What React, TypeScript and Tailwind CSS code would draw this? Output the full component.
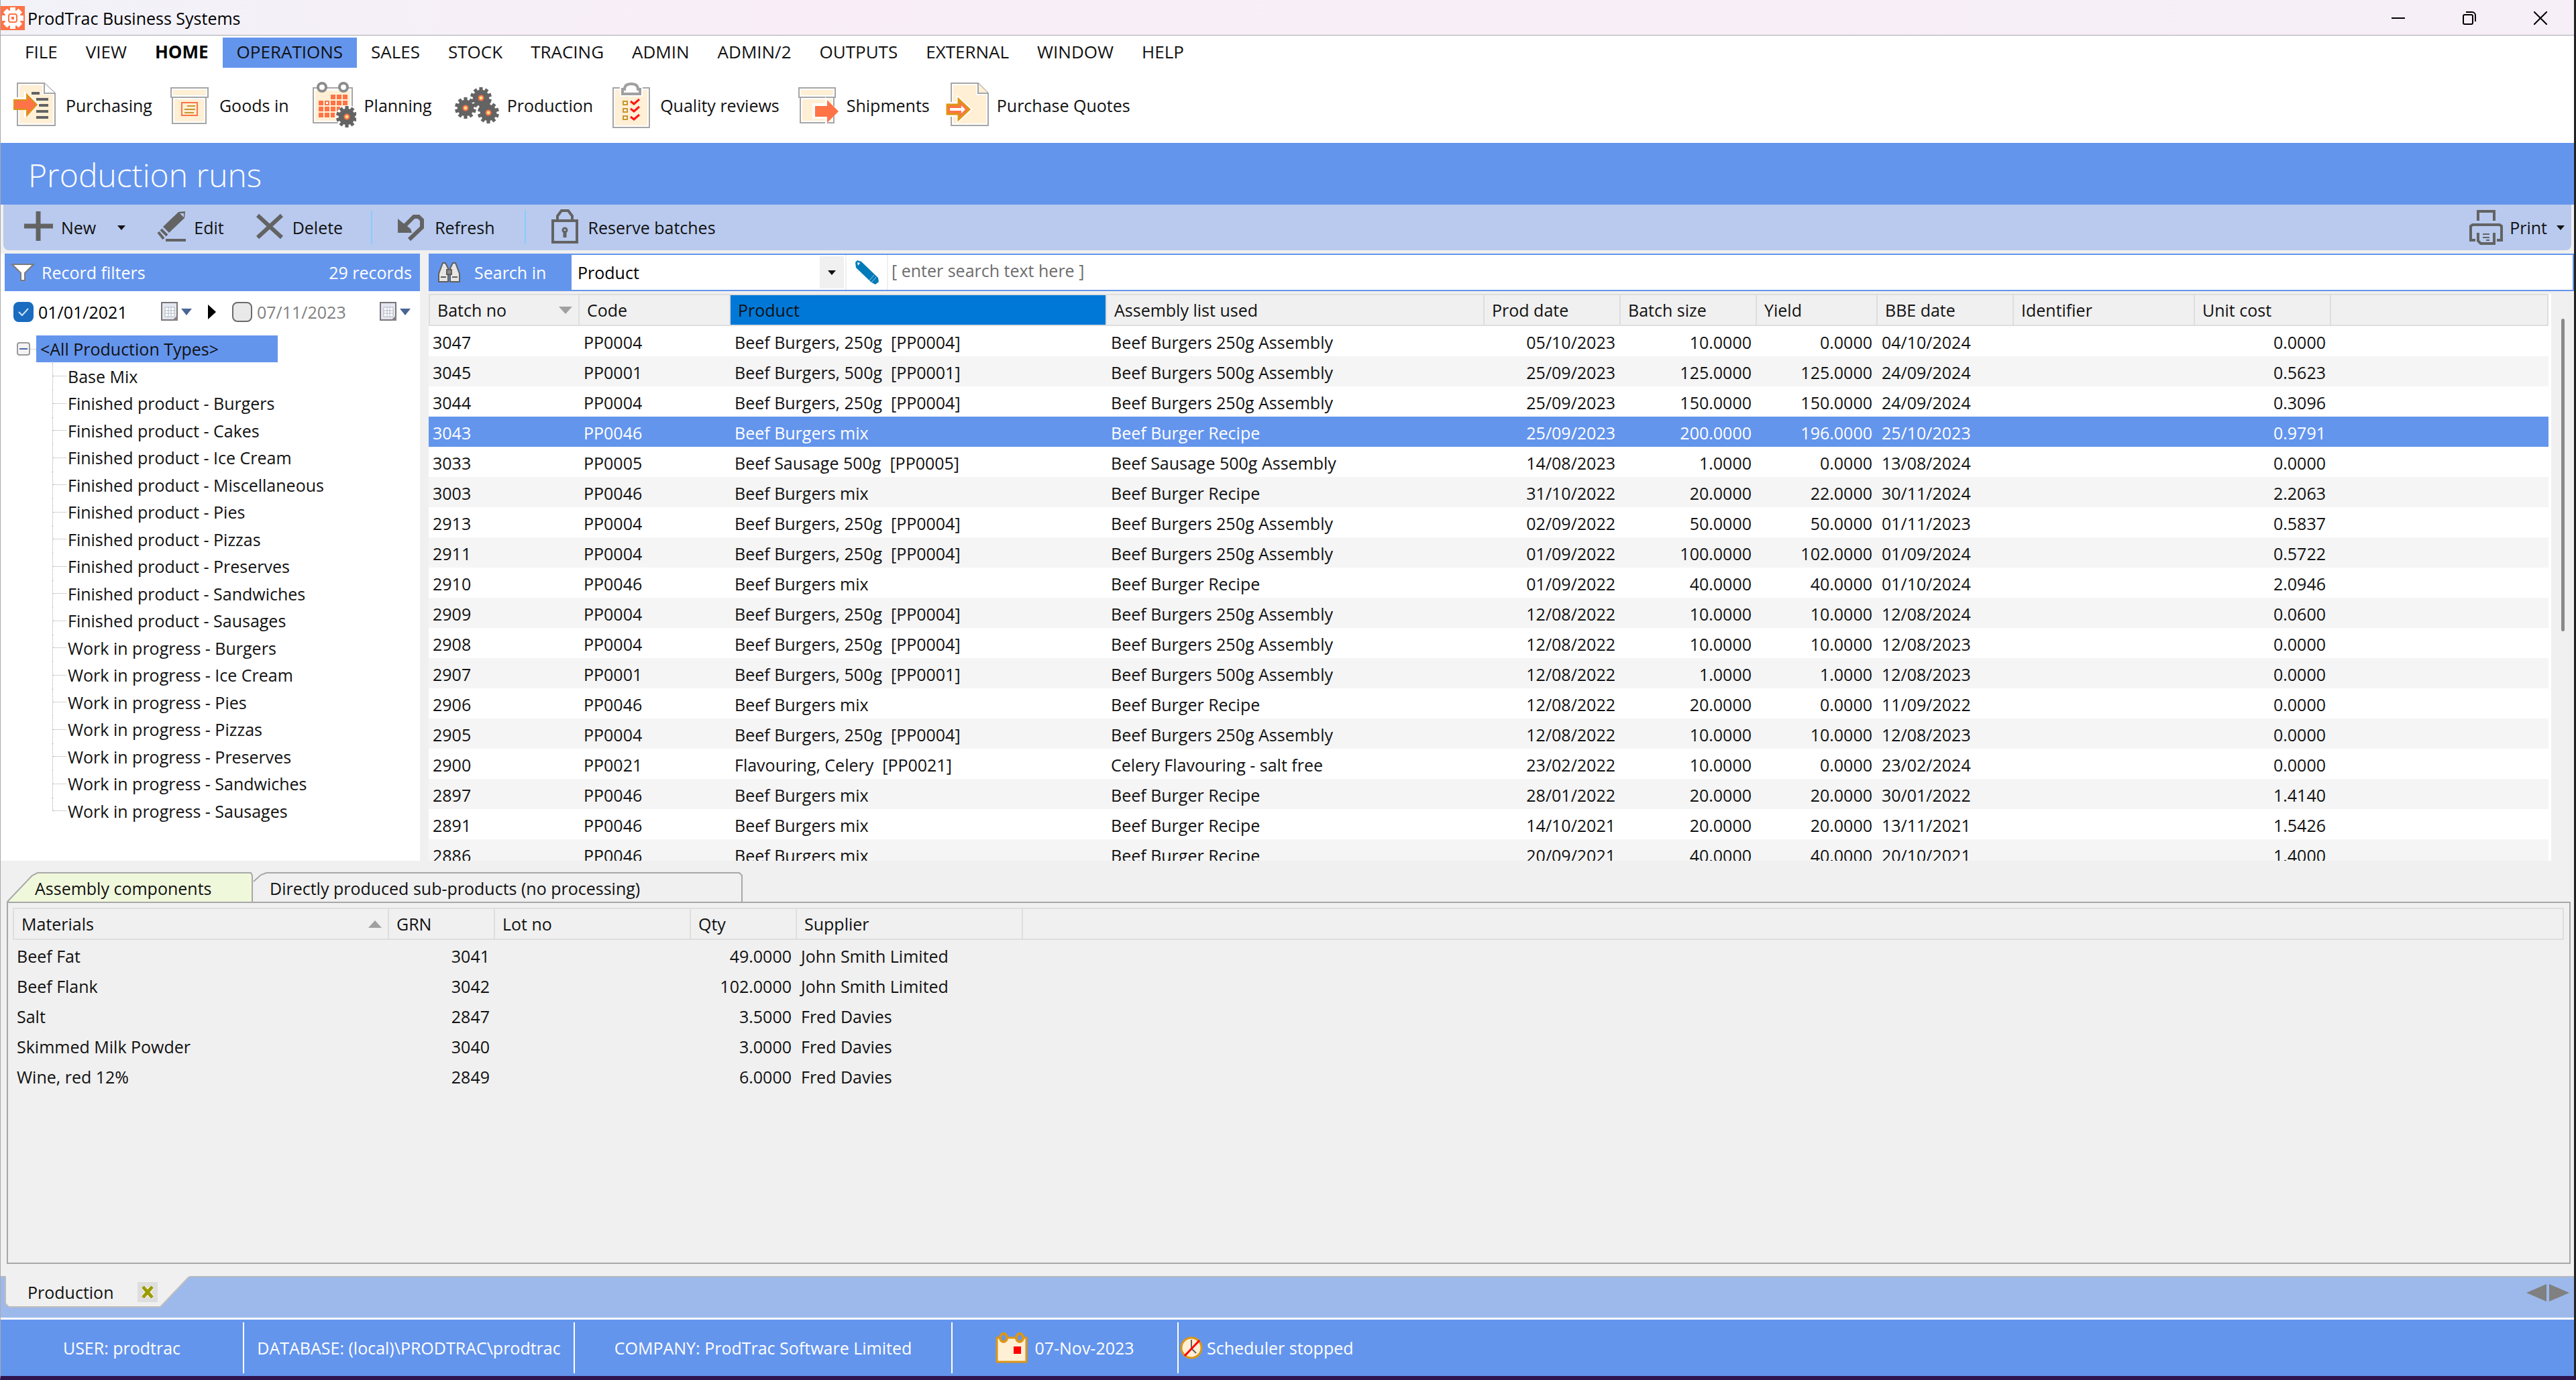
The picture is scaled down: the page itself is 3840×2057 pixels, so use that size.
import type { ReactNode } from "react";
import { useState } from "react";

type Align = "left" | "right";

type Column = {
  label: string;
  width: string;
  align?: Align;
  sort?: "up" | "down";
  highlighted?: boolean;
};

const menuItems = [
  "FILE",
  "VIEW",
  "HOME",
  "OPERATIONS",
  "SALES",
  "STOCK",
  "TRACING",
  "ADMIN",
  "ADMIN/2",
  "OUTPUTS",
  "EXTERNAL",
  "WINDOW",
  "HELP",
];

const productionTypes = [
  "Base Mix",
  "Finished product - Burgers",
  "Finished product - Cakes",
  "Finished product - Ice Cream",
  "Finished product - Miscellaneous",
  "Finished product - Pies",
  "Finished product - Pizzas",
  "Finished product - Preserves",
  "Finished product - Sandwiches",
  "Finished product - Sausages",
  "Work in progress - Burgers",
  "Work in progress - Ice Cream",
  "Work in progress - Pies",
  "Work in progress - Pizzas",
  "Work in progress - Preserves",
  "Work in progress - Sandwiches",
  "Work in progress - Sausages",
];

const runColumns: Column[] = [
  { label: "Batch no", width: "w-[225px]", sort: "down" },
  { label: "Code", width: "w-[225px]" },
  { label: "Product", width: "w-[561px]", highlighted: true },
  { label: "Assembly list used", width: "w-[563px]" },
  { label: "Prod date", width: "w-[203px]", align: "right" },
  { label: "Batch size", width: "w-[203px]", align: "right" },
  { label: "Yield", width: "w-[180px]", align: "right" },
  { label: "BBE date", width: "w-[203px]" },
  { label: "Identifier", width: "w-[270px]" },
  { label: "Unit cost", width: "w-[203px]", align: "right" },
];

const burgers250 = ["PP0004", "Beef Burgers, 250g  [PP0004]", "Beef Burgers 250g Assembly"];
const burgers500 = ["PP0001", "Beef Burgers, 500g  [PP0001]", "Beef Burgers 500g Assembly"];
const burgersMix = ["PP0046", "Beef Burgers mix", "Beef Burger Recipe"];

const runs: string[][] = [
  ["3047", ...burgers250, "05/10/2023", "10.0000", "0.0000", "04/10/2024", "", "0.0000"],
  ["3045", ...burgers500, "25/09/2023", "125.0000", "125.0000", "24/09/2024", "", "0.5623"],
  ["3044", ...burgers250, "25/09/2023", "150.0000", "150.0000", "24/09/2024", "", "0.3096"],
  ["3043", ...burgersMix, "25/09/2023", "200.0000", "196.0000", "25/10/2023", "", "0.9791"],
  ["3033", "PP0005", "Beef Sausage 500g  [PP0005]", "Beef Sausage 500g Assembly", "14/08/2023", "1.0000", "0.0000", "13/08/2024", "", "0.0000"],
  ["3003", ...burgersMix, "31/10/2022", "20.0000", "22.0000", "30/11/2024", "", "2.2063"],
  ["2913", ...burgers250, "02/09/2022", "50.0000", "50.0000", "01/11/2023", "", "0.5837"],
  ["2911", ...burgers250, "01/09/2022", "100.0000", "102.0000", "01/09/2024", "", "0.5722"],
  ["2910", ...burgersMix, "01/09/2022", "40.0000", "40.0000", "01/10/2024", "", "2.0946"],
  ["2909", ...burgers250, "12/08/2022", "10.0000", "10.0000", "12/08/2024", "", "0.0600"],
  ["2908", ...burgers250, "12/08/2022", "10.0000", "10.0000", "12/08/2023", "", "0.0000"],
  ["2907", ...burgers500, "12/08/2022", "1.0000", "1.0000", "12/08/2023", "", "0.0000"],
  ["2906", ...burgersMix, "12/08/2022", "20.0000", "0.0000", "11/09/2022", "", "0.0000"],
  ["2905", ...burgers250, "12/08/2022", "10.0000", "10.0000", "12/08/2023", "", "0.0000"],
  ["2900", "PP0021", "Flavouring, Celery  [PP0021]", "Celery Flavouring - salt free", "23/02/2022", "10.0000", "0.0000", "23/02/2024", "", "0.0000"],
  ["2897", ...burgersMix, "28/01/2022", "20.0000", "20.0000", "30/01/2022", "", "1.4140"],
  ["2891", ...burgersMix, "14/10/2021", "20.0000", "20.0000", "13/11/2021", "", "1.5426"],
  ["2886", ...burgersMix, "20/09/2021", "40.0000", "40.0000", "20/10/2021", "", "1.4000"],
];

const materialColumns: Column[] = [
  { label: "Materials", width: "w-[561px]", sort: "up" },
  { label: "GRN", width: "w-[158px]", align: "right" },
  { label: "Lot no", width: "w-[292px]" },
  { label: "Qty", width: "w-[158px]", align: "right" },
  { label: "Supplier", width: "w-[337px]" },
];

const materials: string[][] = [
  ["Beef Fat", "3041", "", "49.0000", "John Smith Limited"],
  ["Beef Flank", "3042", "", "102.0000", "John Smith Limited"],
  ["Salt", "2847", "", "3.5000", "Fred Davies"],
  ["Skimmed Milk Powder", "3040", "", "3.0000", "Fred Davies"],
  ["Wine, red 12%", "2849", "", "6.0000", "Fred Davies"],
];

function Caret({ className = "" }: { className?: string }) {
  return (
    <svg className={`h-[7px] w-3 ${className}`} viewBox="0 0 12 7" aria-hidden="true">
      <path d="M0 0h12L6 7z" fill="currentColor" />
    </svg>
  );
}

function Gear({ x, y, r, fill = "#636363" }: { x: number; y: number; r: number; fill?: string }) {
  return (
    <g transform={`translate(${x} ${y})`}>
      <circle r={r * 0.76} fill={fill} />
      {[0, 36, 72, 108, 144].map((angle) => (
        <rect key={angle} x={-r * 0.16} y={-r} width={r * 0.32} height={r * 2} fill={fill} transform={`rotate(${angle})`} />
      ))}
      <circle r={r * 0.28} fill="#ff7346" />
      <circle r={r * 0.15} fill="#ffe08a" />
    </g>
  );
}

function RibbonIcon({ wide = false, children }: { wide?: boolean; children: ReactNode }) {
  return (
    <svg
      className={wide ? "h-[72px] w-[84px]" : "h-[72px] w-[72px]"}
      viewBox={wide ? "0 0 84 72" : "0 0 72 72"}
      aria-hidden="true"
    >
      {children}
    </svg>
  );
}

const purchasingIcon = (
  <RibbonIcon>
    <path d="M12 3h40l16 15v48H12z" fill="#fff" stroke="#a6a6a6" strokeWidth="2" />
    <path d="M15 6h34v14h16v43H15z" fill="#ffefd5" />
    <path d="M52 3v15h16" fill="#fff" stroke="#a6a6a6" strokeWidth="2" />
    <path d="M4 24h18v-9l24 19-24 21v-12H4z" fill="#fff" />
    <path d="M33 16h12v4H33zM40 25h18v4H40zM44 34h14v4H44zM40 43h18v4H40zM40 52h18v4H40z" fill="#636363" />
    <path d="M7 28h19v-8l15 15-15 16v-9H7z" fill="#ff7346" stroke="#dc9614" strokeWidth="2" />
  </RibbonIcon>
);

const goodsInIcon = (
  <RibbonIcon>
    <path d="M14 24h50v39H14z" fill="#fff" stroke="#a6a6a6" strokeWidth="2" />
    <path d="M12 10h55v14H12z" fill="#fff" stroke="#a6a6a6" strokeWidth="2" />
    <path d="M15 13h49v8H15zM17 27h44v33H17z" fill="#ffefd5" />
    <path d="M28 32h23v19H28z" fill="#ffefd5" stroke="#ff7346" strokeWidth="2" />
    <path d="M36 36h12v2H36zM32 41h16v2H32zM32 46h14v2H32z" fill="#c8962d" />
  </RibbonIcon>
);

const planningIcon = (
  <RibbonIcon wide>
    <path d="M20 10h58v52H20z" fill="#fff" stroke="#a6a6a6" strokeWidth="2" />
    <path d="M23 14h52v45H23z" fill="#ffefd5" />
    <circle cx="33" cy="9" r="6" fill="#fff" stroke="#8c8c8c" strokeWidth="4" />
    <circle cx="65" cy="9" r="6" fill="#fff" stroke="#8c8c8c" strokeWidth="4" />
    <path
      d="M46 20h7v7h-7zM55 20h7v7h-7zM64 20h7v7h-7zM28 29h7v7h-7zM37 29h7v7h-7zM46 29h7v7h-7zM55 29h7v7h-7zM64 29h7v7h-7zM28 38h7v7h-7zM37 38h7v7h-7zM46 38h7v7h-7zM55 38h5v7h-5zM28 47h7v7h-7zM37 47h7v7h-7zM46 47h6v7h-6z"
      fill="#ff7346"
    />
    <path d="M39 31h3v3h-3z" fill="#fff" />
    <circle cx="71" cy="53" r="17" fill="#fff" />
    <Gear x={70} y={53} r={16} />
  </RibbonIcon>
);

const productionIcon = (
  <RibbonIcon wide>
    <Gear x={34} y={40} r={16} />
    <Gear x={57} y={25} r={16} />
    <Gear x={68} y={47} r={16} />
  </RibbonIcon>
);

const qualityIcon = (
  <RibbonIcon>
    <path d="M14 10h54v59H14z" fill="#fff" stroke="#a6a6a6" strokeWidth="2" />
    <path d="M17 13h48v53H17z" fill="#ffefd5" />
    <path d="M24 7h34v16H24z" fill="#fff" />
    <path d="M28 19v-7h3c0-6 4-8 10-8s10 2 10 8h3v7z" fill="#fff" stroke="#a0a0a0" strokeWidth="4" />
    <path d="M29 30h6v5h-6zM29 41h6v5h-6zM29 52h6v5h-6z" fill="#fff5e1" stroke="#c8962d" strokeWidth="2" />
    <path d="M40 30l5 4 8-7M40 41l5 4 8-7M40 53l5 4 8-7" fill="none" stroke="#ff1414" strokeWidth="3" />
  </RibbonIcon>
);

const shipmentsIcon = (
  <RibbonIcon>
    <path d="M15 24h50v38H15z" fill="#fff" stroke="#a6a6a6" strokeWidth="2" />
    <path d="M13 10h54v14H13z" fill="#fff" stroke="#a6a6a6" strokeWidth="2" />
    <path d="M16 13h48v8H16zM18 27h44v32H18z" fill="#ffefd5" />
    <path d="M33 33h19V23l20 22-20 20v-9H33z" fill="#fff" />
    <path d="M37 37h18v-9l17 17-17 17V53H37z" fill="#ff7346" />
  </RibbonIcon>
);

const quotesIcon = (
  <RibbonIcon>
    <path d="M16 3h40l15 15v48H16z" fill="#fff" stroke="#a6a6a6" strokeWidth="2" />
    <path d="M19 6h34v15h15v42H19z" fill="#ffefd5" />
    <path d="M56 3v15h15" fill="#ffefd5" stroke="#a6a6a6" strokeWidth="2" />
    <path d="M6 31h18V20l24 22-24 22V53H6z" fill="#fff" />
    <path d="M10 35h17v-8l16 15-16 15v-8H10z" fill="#ff7346" stroke="#dc9614" strokeWidth="3" />
    <path d="M14 40h17v-4l6 6-6 6v-4H14z" fill="#fff" />
  </RibbonIcon>
);

const ribbonItems = [
  { label: "Purchasing", icon: purchasingIcon },
  { label: "Goods in", icon: goodsInIcon },
  { label: "Planning", icon: planningIcon },
  { label: "Production", icon: productionIcon },
  { label: "Quality reviews", icon: qualityIcon },
  { label: "Shipments", icon: shipmentsIcon },
  { label: "Purchase Quotes", icon: quotesIcon },
];

function ToolButton({ label, className = "", children }: { label: string; className?: string; children: ReactNode }) {
  return (
    <button type="button" className={`flex items-center gap-[9px] ${className}`}>
      <svg className="h-[54px] w-12" viewBox="0 0 48 54" fill="none" stroke="#636363" aria-hidden="true">
        {children}
      </svg>
      {label}
    </button>
  );
}

function TitleBar() {
  return (
    <header className="flex h-[53px] items-center border-b border-[#a9a9ad] bg-linear-to-r from-[#f2f2f9] via-[#f9eef7] via-30% to-[#f6eff7] pt-[2px] text-black">
      <svg className="h-9 w-9" viewBox="0 0 36 36" aria-hidden="true">
        <path d="M0 0h36v36H0z" fill="#ff7346" />
        <circle cx="18" cy="18" r="12" fill="#fff" />
        <path d="M14 2h8v32h-8zM2 14h32v8H2z" fill="#fff" />
        <path d="M14 2h8v32h-8zM2 14h32v8H2z" fill="#fff" transform="rotate(45 18 18)" />
        <rect x="12" y="12" width="12" height="12" rx="3" fill="none" stroke="#ff7346" strokeWidth="2" />
        <path d="M16 16h4v4h-4z" fill="#ff7346" />
      </svg>
      <span className="ml-1">ProdTrac Business Systems</span>
      <div className="mr-10 ml-auto flex gap-[86px]">
        <button type="button" aria-label="Minimize">
          <svg className="h-5 w-5" viewBox="0 0 20 20">
            <path d="M0 10h20" stroke="#000" strokeWidth="2" />
          </svg>
        </button>
        <button type="button" aria-label="Restore">
          <svg className="h-5 w-5" viewBox="0 0 20 20" fill="none" stroke="#000" strokeWidth="2">
            <rect x="1" y="5" width="14" height="14" rx="2" />
            <path d="M5 1h9a5 5 0 0 1 5 5v9" />
          </svg>
        </button>
        <button type="button" aria-label="Close">
          <svg className="h-5 w-5" viewBox="0 0 20 20">
            <path d="M0 0l20 20M20 0L0 20" stroke="#000" strokeWidth="2" />
          </svg>
        </button>
      </div>
    </header>
  );
}

function MenuBar() {
  return (
    <nav className="flex h-12 items-center bg-white pt-[3px] pl-[15px] text-[26px]">
      {menuItems.map((item) => (
        <button
          key={item}
          type="button"
          className={[
            "h-[45px] px-[21px] pb-1",
            item === "HOME" ? "font-bold text-black" : "",
            item === "OPERATIONS" ? "bg-[#6495ed]" : "",
          ].join(" ")}
        >
          {item}
        </button>
      ))}
    </nav>
  );
}

function ActionBar() {
  return (
    <div className="mx-1 flex h-[68px] items-center rounded-b-lg bg-[#b9caee] pl-[29px]">
      <ToolButton label="New">
        <path d="M2 25h43M23 3v44" strokeWidth="7" />
      </ToolButton>
      <button type="button" aria-label="More new options" className="ml-8">
        <Caret />
      </button>
      <ToolButton label="Edit" className="ml-[45px]">
        <path d="M34 4l10-1-1 10-23 22-9-9z" fill="#636363" stroke="none" />
        <path d="M36 6h6v6z" fill="#b9caee" stroke="none" />
        <path d="M8 30l9 9M4 34l8 10" strokeWidth="4" />
        <path d="M15 46h30" strokeWidth="4" />
      </ToolButton>
      <ToolButton label="Delete" className="ml-[45px]">
        <path d="M5 9l36 33M41 9L5 42" strokeWidth="6" />
      </ToolButton>
      <div className="ml-[42px] h-[50px] w-[2px] bg-[#87cefa]" />
      <ToolButton label="Refresh" className="ml-9">
        <path d="M2 14l6 5 13 10 2 6H2z" fill="#636363" stroke="none" />
        <path d="M9 28l17-17h7l5 5v11L19 45" strokeWidth="6" />
      </ToolButton>
      <div className="ml-11 h-[50px] w-[2px] bg-[#87cefa]" />
      <ToolButton label="Reserve batches" className="ml-9">
        <path d="M4 17h36v32H4z" strokeWidth="4" />
        <path d="M11 16v-6l6-8h10l6 8v6" strokeWidth="4" />
        <path d="M22 32v10" strokeWidth="5" />
        <circle cx="22" cy="31" r="3" strokeWidth="3" />
      </ToolButton>
      <button type="button" className="mr-[10px] ml-auto flex items-center gap-[10px]">
        <svg className="h-[54px] w-[50px]" viewBox="0 0 50 54" fill="none" stroke="#636363" strokeWidth="4" aria-hidden="true">
          <path d="M13 17V3h24v14" />
          <path d="M9 46H2V25l3-2h40l3 2v21h-7" />
          <path d="M13 35v12l4 4h20V35" />
          <path d="M20 37h10M20 42h10M25 46h5" strokeWidth="2" />
        </svg>
        Print
        <Caret className="ml-1" />
      </button>
    </div>
  );
}

function DateFilter({ label, value, enabled }: { label: string; value: string; enabled: boolean }) {
  const [checked, setChecked] = useState(enabled);

  return (
    <div className="flex items-center">
      <span className="relative flex h-[30px] w-[30px]">
        <input
          type="checkbox"
          aria-label={`Use ${label}`}
          checked={checked}
          onChange={() => setChecked(!checked)}
          className="h-[30px] w-[30px] appearance-none rounded-lg border-2 border-[#6b6b6b] bg-[#e9e9e9] checked:border-[#1a6cc0] checked:bg-[#1a6cc0]"
        />
        {checked ? (
          <svg className="pointer-events-none absolute inset-0" viewBox="0 0 30 30" fill="none">
            <path d="M8 15l5 5 9-10" stroke="#cfe4f7" strokeWidth="2" />
          </svg>
        ) : null}
      </span>
      <input
        aria-label={label}
        defaultValue={value}
        className={`ml-[7px] w-[176px] bg-transparent outline-none ${checked ? "text-black" : "text-[#808080]"}`}
      />
      <button type="button" aria-label={`Pick ${label}`} className="ml-[7px] flex items-center gap-1">
        <svg className="h-[30px] w-[26px]" viewBox="0 0 26 30">
          <path d="M1 1h23v21l-5 5H1z" fill="#e3e6ee" stroke="#7a7577" strokeWidth="2" />
          <path d="M6 8h14v14H6z" fill="#fff" />
          <path d="M6 8v14M11 8v14M15 8v14M20 8v14M6 8h14M6 13h14M6 17h14M6 22h14" stroke="#aeb4c2" />
          <path d="M18 28l7-7v7z" fill="#8d7f80" />
        </svg>
        <svg className="h-[10px] w-4" viewBox="0 0 16 10">
          <path d="M0 0h16L8 10z" fill="#4a6596" />
        </svg>
      </button>
    </div>
  );
}

function FilterPanel() {
  return (
    <aside className="flex w-[625px] shrink-0 flex-col bg-white pl-1.5">
      <div className="flex h-14 items-center bg-[#6495ed] pr-3 pl-[9px] text-white">
        <svg className="h-7 w-9" viewBox="0 0 36 28" aria-hidden="true">
          <path d="M2 2h32L21 15v11h-6V15z" fill="#fff" stroke="#7b7b7b" strokeWidth="2" />
        </svg>
        <span className="ml-[10px]">Record filters</span>
        <span className="ml-auto">29 records</span>
      </div>
      <div className="flex h-[62px] items-center pl-[13px]">
        <DateFilter label="from date" value="01/01/2021" enabled />
        <svg className="mx-6 h-[22px] w-3" viewBox="0 0 12 22" aria-hidden="true">
          <path d="M0 0l12 11L0 22z" fill="#000" />
        </svg>
        <DateFilter label="to date" value="07/11/2023" enabled={false} />
      </div>
      <div className="flex h-[733px] flex-col pt-1 pl-[18px]">
        <div className="flex flex-1 items-center">
          <button type="button" aria-label="Collapse" className="h-5 w-5 rounded-sm border-2 border-[#9a9a9a] bg-[#f4f4f4]">
            <span className="mx-auto block h-[2px] w-3 bg-[#4b64a8]" />
          </button>
          <span className="w-[9px] border-t border-dotted border-[#aaa]" />
          <span className="flex h-10 w-[360px] items-center bg-[#6495ed] pl-[6px]">&lt;All Production Types&gt;</span>
        </div>
        {productionTypes.map((type, index) => (
          <div key={type} className="flex flex-1 items-center pl-[53px]">
            <span
              className={[
                "border-l border-dotted border-[#aaa]",
                index === productionTypes.length - 1 ? "h-1/2 self-start" : "self-stretch",
              ].join(" ")}
            />
            <span className="w-5 border-t border-dotted border-[#aaa]" />
            <span className="pl-[2px]">{type}</span>
          </div>
        ))}
      </div>
    </aside>
  );
}

function SearchBar() {
  return (
    <div className="flex h-14 shrink-0 items-center border-2 border-[#6495ed] bg-white">
      <label htmlFor="search-field" className="flex h-full w-[211px] items-center bg-[#6495ed] pl-[11px] text-white">
        <svg className="h-8 w-[35px]" viewBox="0 0 35 32" fill="#e8e6e2" stroke="#5f5f5f" strokeWidth="2" aria-hidden="true">
          <path d="M8 2h4l4 8v20H2V18z" />
          <path d="M27 2h-4l-4 8v20h14V18z" />
          <path d="M5 23h8M22 23h8" />
          <path d="M14 12h7v7h-7z" fill="#8c8c8c" />
        </svg>
        <span className="ml-5">Search in</span>
      </label>
      <div className="relative flex h-full w-[410px] items-center border-r-2 border-[#f0f0f0]">
        <select id="search-field" defaultValue="Product" className="h-full w-full appearance-none bg-white pl-[9px] text-black outline-none">
          <option>Product</option>
          <option>Code</option>
          <option>Batch no</option>
        </select>
        <span className="pointer-events-none absolute top-0.5 right-0.5 bottom-0.5 flex w-9 items-center justify-center bg-[#f0f0f0]">
          <Caret />
        </span>
      </div>
      <button type="button" aria-label="Clear search" className="flex h-full w-[62px] items-center justify-center border-r-2 border-[#f0f0f0]">
        <svg className="h-9 w-9" viewBox="0 0 36 36">
          <path d="M1 3l3-3 6 2 25 24 1 6-5 4-6-3L2 11z" fill="#007ab8" />
          <path d="M4 3l4 1-3 4z" fill="#fff" />
          <path d="M29 22l-7 8M32 25l-7 8" stroke="#9fd0e8" strokeWidth="1" />
        </svg>
      </button>
      <input
        aria-label="Search text"
        placeholder="[ enter search text here ]"
        className="h-full flex-1 pb-[7px] pl-[5px] outline-none placeholder:text-[#6d6d6d]"
      />
    </div>
  );
}

function DataTable({ columns, rows, selected, plain = false }: { columns: Column[]; rows: string[][]; selected?: number; plain?: boolean }) {
  return (
    <table className="w-full table-fixed border-separate border-spacing-0">
      <thead>
        <tr>
          {columns.map((column, index) => (
            <th
              key={column.label}
              className={[
                "h-12 border-y-2 border-r-2 border-[#dedede] pl-[11px] text-left font-normal",
                index === 0 ? "border-l-2" : "",
                column.highlighted ? "bg-[#0078d7]" : "bg-[#f0f0f0]",
                column.width,
              ].join(" ")}
            >
              <span className="flex items-center justify-between pr-[9px]">
                {column.label}
                {column.sort ? (
                  <svg className="h-[11px] w-5" viewBox="0 0 20 11" aria-hidden="true">
                    <path d={column.sort === "down" ? "M0 0h20L10 11z" : "M0 11h20L10 0z"} fill="#a0a0a0" />
                  </svg>
                ) : null}
              </span>
            </th>
          ))}
          <th className="border-y-2 border-r-2 border-[#dedede] bg-[#f0f0f0]" aria-label="Filler" />
        </tr>
      </thead>
      <tbody>
        {rows.map((row, rowIndex) => {
          const striped = rowIndex % 2 === 1 ? "bg-[#f5f5f5]" : "bg-white";
          const tone = rowIndex === selected ? "bg-[#6495ed] text-white" : striped;

          return (
            <tr key={row[0]} className={plain ? "" : tone}>
              {row.map((cell, index) => (
                <td
                  key={columns[index].label}
                  className={`h-[45px] pt-[3px] pr-2 pb-0 pl-[6px] whitespace-pre ${columns[index].align === "right" ? "text-right" : "text-left"}`}
                >
                  {cell}
                </td>
              ))}
              <td />
            </tr>
          );
        })}
      </tbody>
    </table>
  );
}

function DetailTabs() {
  return (
    <div className="flex h-[44px] shrink-0 pl-[9px]" role="tablist">
      <button type="button" role="tab" aria-selected="true" className="relative w-[367px] pt-1 pl-[42px] text-left">
        <svg className="absolute inset-0 h-full w-full" viewBox="0 0 367 44" preserveAspectRatio="none" aria-hidden="true">
          <path d="M1 44L38 5l8-4h318l3 4v39z" fill="#f0f8dc" />
          <path d="M1 44L38 5l8-4h318l2 4v39" fill="none" stroke="#a8a8a8" strokeWidth="2" />
        </svg>
        <span className="relative">Assembly components</span>
      </button>
      <button type="button" role="tab" aria-selected="false" className="relative w-[730px] pt-1 pl-[25px] text-left">
        <svg className="absolute inset-0 h-full w-full" viewBox="0 0 730 44" preserveAspectRatio="none" aria-hidden="true">
          <path d="M1 14L12 4l8-3h705l4 4v39" fill="none" stroke="#a8a8a8" strokeWidth="2" />
        </svg>
        <span className="relative">Directly produced sub-products (no processing)</span>
      </button>
    </div>
  );
}

function WindowTabs() {
  return (
    <div className="flex h-[62px] shrink-0 items-start border-t-2 border-[#b4bac4] bg-[#9db9eb]">
      <div className="relative -mt-0.5 ml-1.5 flex h-12 w-[276px] items-center pl-[34px]">
        <svg className="absolute inset-0 h-full w-full" viewBox="0 0 276 48" aria-hidden="true">
          <path d="M1 0v41l5 5h226L276 0z" fill="#f0f0f0" />
          <path d="M1 0v41l5 5h226L275 1" fill="none" stroke="#bdbdbd" strokeWidth="2" />
        </svg>
        <a href="#production" className="relative">
          Production
        </a>
        <button type="button" aria-label="Close Production" className="absolute left-[198px] flex h-[30px] w-[30px] items-center justify-center bg-[#dedede]">
          <svg className="h-[18px] w-[18px]" viewBox="0 0 18 18">
            <path d="M2 1l14 16M16 1L2 17" stroke="#fff" strokeWidth="7" />
            <path d="M2 1l14 16M16 1L2 17" stroke="#9b9b00" strokeWidth="5" />
          </svg>
        </button>
      </div>
      <div className="mt-[10px] mr-[7px] ml-auto flex gap-1">
        <button type="button" aria-label="Previous window">
          <svg className="h-[26px] w-[30px]" viewBox="0 0 30 26">
            <path d="M30 0v26L0 13z" fill="#808080" />
          </svg>
        </button>
        <button type="button" aria-label="Next window">
          <svg className="h-[26px] w-[30px]" viewBox="0 0 30 26">
            <path d="M0 0v26l30-13z" fill="#808080" />
          </svg>
        </button>
      </div>
    </div>
  );
}

function StatusCell({ width, children }: { width: string; children: ReactNode }) {
  return (
    <div className={`flex h-[76px] items-center justify-center gap-[10px] border-r-2 border-white ${width}`}>{children}</div>
  );
}

function StatusBar() {
  return (
    <footer className="flex h-[87px] shrink-0 items-center border-t-[3px] border-white bg-[#6495ed] text-white">
      <StatusCell width="w-[363px]">USER: prodtrac</StatusCell>
      <StatusCell width="w-[493px]">DATABASE: (local)\PRODTRAC\prodtrac</StatusCell>
      <StatusCell width="w-[563px]">COMPANY: ProdTrac Software Limited</StatusCell>
      <StatusCell width="w-[337px]">
        <svg className="h-[46px] w-12" viewBox="0 0 48 46" aria-hidden="true">
          <path d="M2 8h44v36H2z" fill="#ffefd5" stroke="#dc9614" strokeWidth="3" />
          <ellipse cx="12" cy="8" rx="5" ry="6" fill="#6495ed" stroke="#dc9614" strokeWidth="4" />
          <ellipse cx="36" cy="8" rx="5" ry="6" fill="#6495ed" stroke="#dc9614" strokeWidth="4" />
          <path d="M27 21h11v11H27z" fill="#f00" />
        </svg>
        07-Nov-2023
      </StatusCell>
      <div className="flex items-center gap-[5px] pl-[2px]">
        <svg className="h-[35px] w-[35px]" viewBox="0 0 35 35" fill="none" aria-hidden="true">
          <circle cx="17" cy="17" r="15" fill="#ffefd5" stroke="#dc9614" strokeWidth="3" />
          <path d="M17 5v13l7 7" stroke="#636363" strokeWidth="2" />
          <path d="M29 6L7 29" stroke="#f00" strokeWidth="3" />
        </svg>
        Scheduler stopped
      </div>
    </footer>
  );
}

export default function App() {
  return (
    <div className="flex h-screen flex-col overflow-hidden border-r-[3px] border-b-[6px] border-l border-r-[#222] border-b-[#2f1550] border-l-[#a9a9ad] bg-[#f0f0f0] font-['Open_Sans','Noto_Sans',sans-serif] text-[25px] leading-8 text-[#111]">
      <TitleBar />
      <MenuBar />
      <div className="flex h-[112px] shrink-0 items-center gap-4 bg-white pb-[1px] pl-[13px]">
        {ribbonItems.map((item) => (
          <button key={item.label} type="button" className="flex h-[72px] items-center gap-3">
            {item.icon}
            {item.label}
          </button>
        ))}
      </div>
      <div className="flex h-[92px] shrink-0 items-center bg-[#6495ed] pt-1 pl-[41px]">
        <h1 className="text-[48px] leading-[60px] font-light text-white">Production runs</h1>
      </div>
      <div className="mb-[5px] shrink-0">
        <ActionBar />
      </div>

      <div className="flex h-[44vh] shrink-0 gap-[13px] overflow-hidden">
        <FilterPanel />
        <section className="flex min-w-0 flex-1 flex-col">
          <SearchBar />
          <div className="mt-1 flex min-h-0 flex-1">
            <div className="flex-1 overflow-hidden bg-white pr-1">
              <DataTable columns={runColumns} rows={runs} selected={3} />
            </div>
            <div className="w-[34px] pt-[37px] pl-[15px]">
              <div className="h-[466px] w-[5px] rounded-full bg-[#8a8a8a]" />
            </div>
          </div>
        </section>
      </div>

      <div className="mt-[17px] flex flex-1 flex-col">
        <DetailTabs />
        <div className="mr-[5px] mb-[18px] ml-[9px] flex-1 border-2 border-[#a8a8a8] pt-[7px] pr-2 pl-[7px]">
          <DataTable columns={materialColumns} rows={materials} plain />
        </div>
      </div>

      <WindowTabs />
      <StatusBar />
    </div>
  );
}
